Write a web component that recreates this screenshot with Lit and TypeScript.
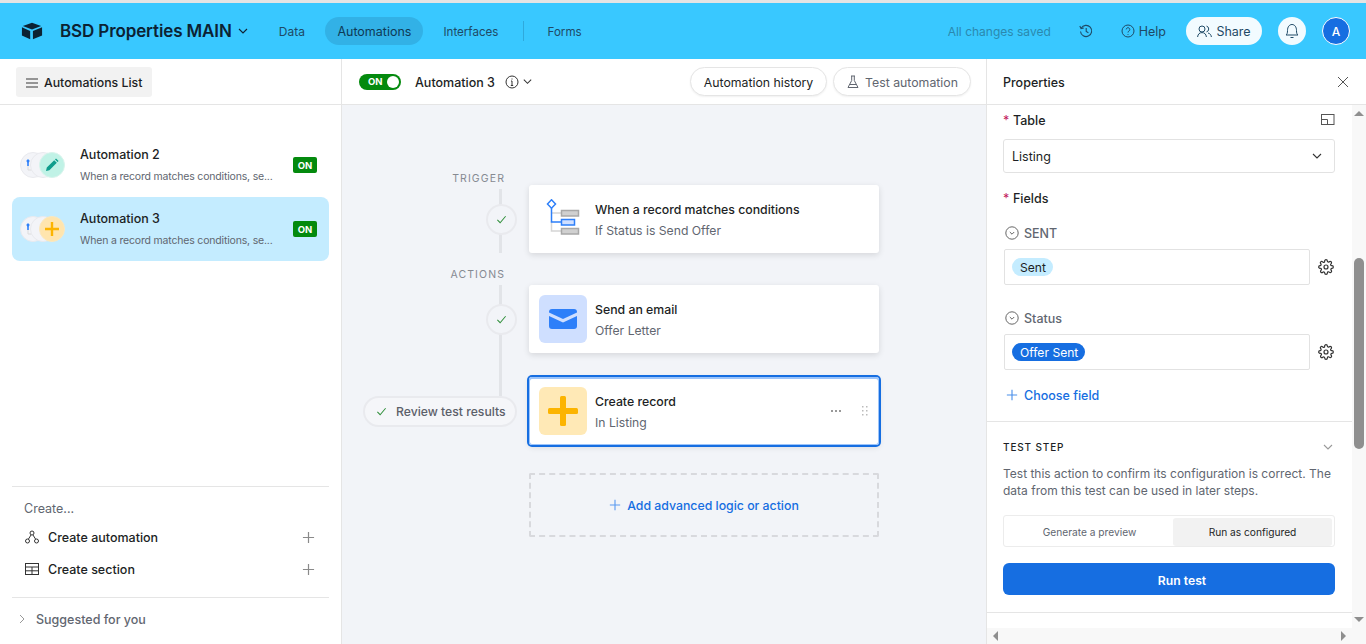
import { LitElement, html, css, svg } from "lit";
import { customElement } from "lit/decorators.js";

const chev = (s = 12, c = "currentColor") => html`<svg width=${s} height=${s} viewBox="0 0 12 12" fill="none" stroke=${c} stroke-width="1.1"><path d="M2 4l4 4 4-4"/></svg>`;
const plus = (s = 14, c = "#8a8a8a", w = 1.3) => html`<svg width=${s} height=${s} viewBox="0 0 14 14" fill="none" stroke=${c} stroke-width=${w}><path d="M7 1v12M1 7h12"/></svg>`;
const check = (s = 12) => html`<svg width=${s} height=${s} viewBox="0 0 12 12" fill="none" stroke="#2f8f3a" stroke-width="1.1"><path d="M1.5 6.5l3 3 6-7"/></svg>`;
const gear = html`<svg width="16" height="16" viewBox="0 0 24 24" fill="none" stroke="#333" stroke-width="1.8" stroke-linejoin="round"><circle cx="12" cy="12" r="3"/><path d="M19.4 15a1.65 1.65 0 0 0 .33 1.82l.06.06a2 2 0 1 1-2.83 2.83l-.06-.06a1.65 1.65 0 0 0-2.82 1.17V21a2 2 0 1 1-4 0v-.09a1.65 1.65 0 0 0-2.82-1.08l-.06.06a2 2 0 1 1-2.83-2.83l.06-.06A1.65 1.65 0 0 0 3.09 14H3a2 2 0 1 1 0-4h.09a1.65 1.65 0 0 0 1.08-2.82l-.06-.06a2 2 0 1 1 2.83-2.83l.06.06A1.65 1.65 0 0 0 10 3.09V3a2 2 0 1 1 4 0v.09a1.65 1.65 0 0 0 2.82 1.08l.06-.06a2 2 0 1 1 2.83 2.83l-.06.06A1.65 1.65 0 0 0 20.91 10H21a2 2 0 1 1 0 4h-.09a1.65 1.65 0 0 0-1.51 1z"/></svg>`;
const circleChev = html`<svg width="14" height="14" viewBox="0 0 14 14" fill="none" stroke="#666" stroke-width="1"><circle cx="7" cy="7" r="6.2"/><path d="M4.8 6l2.2 2.2L9.2 6"/></svg>`;
const triggerMini = svg`<path d="M3 0l1.800 2L3 4 1.200 2z" fill="#2d7ff9"/><path d="M3 3v4" stroke="#2d7ff9" stroke-width="1.600" fill="none"/><path d="M3 7v4h4" stroke="#dcdcdc" stroke-width="1" fill="none"/>`;

@customElement("app-root")
export class AppRoot extends LitElement {
  static styles = css`
    :host { display: block; width: 1366px; height: 644px; overflow: hidden; font-family: Inter, "Noto Sans", sans-serif; color: #1d1f25; font-size: 13px; background: #fff; }
    * { box-sizing: border-box; }
    svg { display: block; flex: none; }
    .strip { height: 3px; background: #e4e4e4; }
    header { height: 56px; background: #39c8ff; display: flex; align-items: center; padding: 0 16px 0 21px; }
    .logo { margin-right: 17px; }
    .base { font-size: 17px; font-weight: 600; color: #0c2233; letter-spacing: -0.12px; white-space: nowrap; }
    .base-chev { margin: 0 30px 0 5px; color: #123; }
    .nav { color: #1f4a66; padding: 0 12px; height: 28px; display: flex; align-items: center; border-radius: 14px; font-size: 12.5px; }
    .nav.data { font-size: 12px; padding: 0 13.5px 0 0; }
    .nav.on { background: #32b1e6; color: #0f3a55; margin: 0 8px 0 7px; }
    .nav.tight { font-size: 11.6px; padding-top: 1px; }
    .nav-div { width: 1px; height: 20px; background: #2fa9dc; margin: 0 12px; }
    .grow { flex: 1; }
    .saved { color: #2b88ae; font-size: 12px; margin-right: 28px; }
    .help { display: flex; align-items: center; gap: 4px; color: #1f4a66; font-size: 12.5px; margin: 0 20px 0 28px; }
    .share { width: 76px; height: 28px; background: #f2fbff; border-radius: 14px; display: flex; align-items: center; justify-content: center; gap: 4px; color: #1f4a66; font-size: 12.5px; }
    .bell { width: 28px; height: 28px; border-radius: 50%; background: #f2fbff; display: flex; align-items: center; justify-content: center; margin: 0 16px; }
    .avatar { width: 28px; height: 28px; border-radius: 50%; background: #166ee1; border: 1px solid #fff; color: #fff; display: flex; align-items: center; justify-content: center; font-size: 12px; font-weight: 500; }
    .main { display: grid; grid-template-columns: 342px 644px 380px; height: 585px; }
    aside { border-right: 1px solid #e5e5e5; display: flex; flex-direction: column; }
    .side-head { height: 46px; border-bottom: 1px solid #e5e5e5; padding: 8px 16px; }
    .list-btn { width: 136px; height: 30px; background: #f2f2f2; border-radius: 3px; display: flex; align-items: center; gap: 6px; padding: 1px 0 0 10px; font-weight: 500; font-size: 12.3px; white-space: nowrap; }
    .items { padding: 28px 12px 0; flex: 1; }
    .item { height: 64px; border-radius: 8px; display: flex; align-items: center; padding: 0 12px 0 8px; }
    .item.on { background: #c4ecff; }
    .stack { width: 60px; height: 26px; display: flex; }
    .dot { width: 26px; height: 26px; border-radius: 50%; background: #f3f4f8; border: 1px solid #e9eaee; margin-right: -16px; display: flex; align-items: center; justify-content: center; padding: 0 8px 0 0; flex: none; }
    .dot.mid { margin-right: -17px; }
    .dot.teal { background: #c0f2e6; border-color: #d8f4ec; padding: 0; }
    .dot.amber { background: #ffe5ae; border-color: #fbe8c0; padding: 0; }
    .item-text { flex: 1; min-width: 0; padding-top: 2px; }
    .t { font-weight: 500; font-size: 12.5px; line-height: 16px; margin-bottom: 6px; }
    .s { font-size: 10.5px; letter-spacing: -0.18px; line-height: 16px; color: #616670; white-space: nowrap; }
    .badge { width: 24px; height: 16px; background: #048a0e; color: #fff; border-radius: 2px; font-size: 9.5px; font-weight: 700; display: flex; align-items: center; justify-content: center; }
    .create { margin: 0 12px; border-top: 1px solid #e5e5e5; height: 111px; padding: 14px 12px 0; }
    .c-label { color: #616670; font-size: 12.5px; line-height: 16px; margin-bottom: 4px; }
    .c-row { height: 32px; display: flex; align-items: center; gap: 8px; font-weight: 500; font-size: 12.5px; padding-right: 2px; }
    .c-row span { flex: 1; }
    .suggest { margin: 0 12px; border-top: 1px solid #e5e5e5; height: 47px; display: flex; align-items: center; gap: 9px; padding: 0 0 4px 5px; color: #616670; font-size: 12.5px; font-weight: 500; }
    .center { display: flex; flex-direction: column; background: #f2f4f8; }
    .tool { height: 46px; background: #fff; border-bottom: 1px solid #e5e5e5; display: flex; align-items: center; padding: 0 15px 0 17px; }
    .toggle { width: 42px; height: 16px; background: #048a0e; border-radius: 8px; display: flex; align-items: center; justify-content: space-between; padding: 0 2px 0 9px; color: #fff; font-size: 9.5px; font-weight: 700; margin-right: 14px; }
    .knob { width: 12px; height: 12px; border-radius: 50%; background: #fff; }
    .a-name { font-weight: 500; font-size: 12.5px; margin-right: 10px; padding-top: 2px; }
    .pill-btn { height: 29px; border-radius: 15px; background: #fff; border: 1px solid #e5e5e5; display: flex; align-items: center; justify-content: center; gap: 5px; font-size: 12.3px; padding-top: 1px; box-shadow: 0 1px 2px rgba(0,0,0,.06); }
    .canvas { flex: 1; padding-top: 65px; }
    .lab { width: 163px; text-align: right; font-size: 10.5px; letter-spacing: 1.1px; color: #868a92; line-height: 17px; height: 15px; }
    .lab.a { margin-top: 13px; height: 19px; }
    .step { display: grid; grid-template-columns: 187px 350px; height: 68px; }
    .rail { position: relative; display: flex; align-items: center; justify-content: flex-end; padding-right: 12px; }
    .line { position: absolute; width: 3px; right: 27px; background: #e2e4e8; }
    .node { position: relative; width: 31px; height: 31px; border-radius: 50%; background: #f2f4f8; border: 2px solid #e9eaee; display: flex; align-items: center; justify-content: center; }
    .review { position: relative; height: 31px; border-radius: 16px; background: #f5f6f9; border: 2px solid #e9eaee; width: 154px; display: flex; align-items: center; gap: 9px; padding: 1px 0 0 11px; color: #5c6069; font-size: 12.2px; font-weight: 500; white-space: nowrap; }
    .card { background: #fff; border-radius: 3px; box-shadow: 0 2px 6px rgba(0,0,0,.12); display: flex; align-items: center; padding: 0 10px; gap: 8px; }
    .card.sel { box-shadow: inset 0 0 0 1px #9cc4fa, inset 0 1px 0 1px #9cc4fa, 0 0 0 2px #166ee1, 0 2px 6px rgba(0,0,0,.12); }
    .ic { width: 48px; height: 48px; border-radius: 6px; display: flex; align-items: center; justify-content: center; flex: none; }
    .ic.blue { background: #cfdfff; }
    .ic.amber { background: #ffe9b6; }
    .ctext { flex: 1; padding-top: 2px; }
    .ct { font-weight: 500; font-size: 12.3px; line-height: 16px; margin-bottom: 5px; white-space: nowrap; }
    .cs { font-size: 12.2px; line-height: 16px; color: #616670; }
    .dashed { margin: 28px 0 0 187px; width: 350px; height: 64px; border: 2px dashed #d8d9dd; border-radius: 2px; display: flex; align-items: center; justify-content: center; gap: 6px; color: #166ee1; font-weight: 500; font-size: 12.3px; }
    .props { display: flex; flex-direction: column; border-left: 1px solid #e5e5e5; }
    .props-head { height: 46px; border-bottom: 1px solid #e5e5e5; display: flex; align-items: center; justify-content: space-between; padding: 0 17px 0 16px; font-weight: 500; font-size: 12.5px; }
    .props-head span { padding-top: 2px; }
    .props-body { flex: 1; display: flex; min-height: 0; }
    .content { width: 365px; display: flex; flex-direction: column; }
    .form { height: 317px; padding: 7px 16px 0 16px; border-bottom: 1px solid #e5e5e5; }
    .lbl { display: flex; align-items: center; font-weight: 500; font-size: 12.5px; height: 16px; }
    .star { color: #c2185b; width: 10px; font-weight: 400; }
    .select { width: 332px; height: 34px; margin-top: 11px; border: 1px solid #e2e2e2; border-radius: 3px; display: flex; align-items: center; justify-content: space-between; padding: 0 11px 0 8px; font-size: 12.5px; }
    .field-l { display: flex; align-items: center; gap: 5px; color: #616670; font-size: 12.5px; font-weight: 500; height: 16px; margin-left: 2px; }
    .field-r { display: flex; align-items: center; gap: 8px; margin-left: 1px; margin-top: 8px; }
    .input { width: 306px; height: 36px; border: 1px solid #e2e2e2; border-radius: 2px; display: flex; align-items: center; padding: 0 7px; }
    .tag { height: 18px; line-height: 20px; border-radius: 9px; padding: 0 7px 0 8px; font-size: 12.1px; }
    .tag.l { background: #c4ecff; color: #1d1f25; }
    .tag.d { background: #166ee1; color: #fff; }
    .choose { display: flex; align-items: center; gap: 6px; color: #166ee1; font-weight: 500; font-size: 12.5px; margin: 17px 0 0 3px; height: 16px; }
    .test { height: 191px; border-bottom: 1px solid #e5e5e5; padding: 17px 16px 0; }
    .test-h { display: flex; align-items: center; justify-content: space-between; font-size: 10px; font-weight: 500; letter-spacing: .85px; height: 16px; padding-right: 2px; color: #1d1f25; }
    .desc { width: 332px; margin-top: 10px; font-size: 12px; line-height: 17px; color: #616670; }
    .seg { width: 332px; height: 32px; margin-top: 16px; border: 1px solid #ececec; border-radius: 3px; padding: 2px; display: grid; grid-template-columns: 1fr 159px; font-size: 10.2px; color: #616670; text-align: center; line-height: 28px; }
    .seg .act { background: #f2f2f2; border-radius: 3px; color: #1d1f25; }
    .run { width: 332px; height: 32px; margin-top: 16px; background: #166ee1; border-radius: 6px; color: #fff; font-weight: 600; font-size: 12.2px; display: flex; align-items: center; justify-content: center; padding: 2px 0 0 26px; }
    .vbar { width: 14px; background: #f8f8f8; position: relative; }
    .thumb { position: absolute; left: 2px; width: 10px; top: 153px; height: 191px; background: #8f8f8f; border-radius: 5px; }
    .arrow { position: absolute; left: 2px; width: 0; height: 0; border-left: 5px solid transparent; border-right: 5px solid transparent; }
    .arrow.u { top: 6px; border-bottom: 5px solid #8f8f8f; }
    .arrow.d { bottom: 6px; border-top: 5px solid #8f8f8f; }
    .hbar { height: 16px; background: #f8f8f8; display: flex; align-items: center; justify-content: space-between; padding: 0 20px 0 6px; }
    .al { border-top: 5px solid transparent; border-bottom: 5px solid transparent; border-right: 5px solid #8f8f8f; }
    .ar { border-top: 5px solid transparent; border-bottom: 5px solid transparent; border-left: 5px solid #8f8f8f; }
  `;

  private minis() {
    return html`<div class="dot"><svg width="8" height="12" viewBox="0 0 8 12">${triggerMini}</svg></div><div class="dot mid"></div>`;
  }

  render() {
    return html`
      <div class="strip"></div>
      <header>
        <svg class="logo" width="22" height="18" viewBox="0 0 24 18" fill="#0c2233"><path d="M12 0L2 3.6l10 3.8 10-3.8z"/><path d="M13 9v9l10-4V5z"/><path d="M1 5v9l9 4V9z"/></svg>
        <div class="base">BSD Properties MAIN</div>
        <div class="base-chev">${chev(12)}</div>
        <div class="nav data">Data</div>
        <div class="nav on">Automations</div>
        <div class="nav tight">Interfaces</div>
        <div class="nav-div"></div>
        <div class="nav tight">Forms</div>
        <div class="grow"></div>
        <div class="saved">All changes saved</div>
        <svg width="14" height="14" viewBox="0 0 14 14" fill="none" stroke="#1f4a66" stroke-width="1.1"><path d="M2.2 4.2A5.6 5.6 0 1 1 1.5 7.5"/><path d="M.8 2l1.3 2.6L4.8 4"/><path d="M7.2 4v3.4l2.2 1.3"/></svg>
        <div class="help"><svg width="14" height="14" viewBox="0 0 14 14" fill="none" stroke="#1f4a66" stroke-width="1"><circle cx="7" cy="7" r="6"/><path d="M5.2 5.4a1.8 1.8 0 1 1 2.8 1.6c-.7.4-1 .8-1 1.5"/><path d="M7 10v.8"/></svg>Help</div>
        <div class="share"><svg width="15" height="13" viewBox="0 0 15 13" fill="none" stroke="#1f4a66" stroke-width="1"><circle cx="5" cy="4" r="3"/><path d="M.6 12c.3-3 2-4.4 4.4-4.4S9.100 9 9.400 12"/><path d="M9.500 1.100a3 3 0 0 1 0 5.800M11 8c2 .4 3.100 1.800 3.400 4"/></svg>Share</div>
        <div class="bell"><svg width="14" height="16" viewBox="0 0 14 16" fill="none" stroke="#1f4a66" stroke-width="1"><path d="M1 12c1.200-1 1.500-2 1.500-4.500C2.500 4 4.300 1.500 7 1.500s4.500 2.500 4.500 6c0 2.500.3 3.500 1.500 4.500z"/><path d="M5.500 14.500h3"/></svg></div>
        <div class="avatar">A</div>
      </header>
      <div class="main">
        <aside>
          <div class="side-head"><div class="list-btn"><svg width="12" height="10" viewBox="0 0 12 10" fill="none" stroke="#777" stroke-width="1.400"><path d="M0 1h12M0 5h12M0 9h12"/></svg>Automations List</div></div>
          <div class="items">
            <div class="item">
              <div class="stack">${this.minis()}<div class="dot teal"><svg width="16" height="16" viewBox="0 0 16 16" fill="#0f9d8c"><path d="M2 14l.8-3.400 7.400-7.400 2.600 2.600-7.400 7.400zM11 2.400l1-1 2.600 2.600-1 1z"/></svg></div></div>
              <div class="item-text"><div class="t">Automation 2</div><div class="s">When a record matches conditions, se...</div></div>
              <div class="badge">ON</div>
            </div>
            <div class="item on">
              <div class="stack">${this.minis()}<div class="dot amber"><svg width="16" height="16" viewBox="0 0 16 16" fill="none" stroke="#fcb400" stroke-width="2.400"><path d="M8 1v14M1 8h14"/></svg></div></div>
              <div class="item-text"><div class="t">Automation 3</div><div class="s">When a record matches conditions, se...</div></div>
              <div class="badge">ON</div>
            </div>
          </div>
          <div class="create">
            <div class="c-label">Create...</div>
            <div class="c-row"><svg width="16" height="14" viewBox="0 0 16 14" fill="none" stroke="#333" stroke-width="1"><circle cx="8" cy="3" r="2"/><circle cx="3.500" cy="11" r="2"/><circle cx="12.500" cy="11" r="2"/><path d="M7 5l-2.500 4M9 5l2.500 4"/></svg><span>Create automation</span>${plus(13)}</div>
            <div class="c-row"><svg width="16" height="14" viewBox="0 0 16 14" fill="none" stroke="#333" stroke-width="1"><rect x="1.500" y="1.500" width="13" height="11"/><path d="M1.500 5h13M1.500 8.800h13M8 5v7.500"/></svg><span>Create section</span>${plus(13)}</div>
          </div>
          <div class="suggest"><svg width="10" height="12" viewBox="0 0 10 12" fill="none" stroke="#999" stroke-width="1"><path d="M3 2l4 4-4 4"/></svg>Suggested for you</div>
        </aside>
        <section class="center">
          <div class="tool">
            <div class="toggle">ON<div class="knob"></div></div>
            <div class="a-name">Automation 3</div>
            <svg width="14" height="14" viewBox="0 0 14 14" fill="none" stroke="#333" stroke-width="1"><circle cx="7" cy="7" r="6"/><path d="M7 6v4.500M5.800 10.500h2.400M6 6h1M7 3.500v1"/></svg>
            <div style="margin-left:3px">${chev(11, "#333")}</div>
            <div class="grow"></div>
            <div class="pill-btn" style="width:137px;margin-right:6px">Automation history</div>
            <div class="pill-btn" style="width:138px;color:#616670"><svg width="14" height="14" viewBox="0 0 14 14" fill="none" stroke="#616670" stroke-width="1"><path d="M5 1h4M5.700 1v4.500L2 12.500h10L8.300 5.500V1"/><path d="M3.800 9.500h6.400"/></svg>Test automation</div>
          </div>
          <div class="canvas">
            <div class="lab">TRIGGER</div>
            <div class="step">
              <div class="rail"><div class="line" style="top:4px;bottom:0"></div><div class="node">${check(11)}</div></div>
              <div class="card" style="gap:15px;padding-left:16px">
                <svg width="35" height="40" viewBox="0 0 35 40" fill="none"><path d="M6.500 14H16M6.500 22v10H16" stroke="#d5d5d5" stroke-width="1.500"/><path d="M6.500 9v14H16" stroke="#2d7ff9" stroke-width="1.500"/><path d="M6.500 .8l4 4.200-4 4.200-4-4.200z" stroke="#2d7ff9" stroke-width="1.500" fill="#fff"/><rect x="16.500" y="11.500" width="17" height="5.500" fill="#d0d0d0" stroke="#a8a8a8" stroke-width="1.500"/><rect x="16.500" y="20.500" width="13" height="5.500" fill="#cfdfff" stroke="#2d7ff9" stroke-width="1.500"/><rect x="16.500" y="29.500" width="17" height="5.500" fill="#d0d0d0" stroke="#a8a8a8" stroke-width="1.500"/></svg>
                <div class="ctext"><div class="ct">When a record matches conditions</div><div class="cs">If Status is Send Offer</div></div>
              </div>
            </div>
            <div class="lab a">ACTIONS</div>
            <div class="step">
              <div class="rail"><div class="line" style="top:0;bottom:-43px"></div><div class="node">${check(11)}</div></div>
              <div class="card">
                <div class="ic blue"><svg width="28" height="20" viewBox="0 0 28 20"><path d="M3 0h22a3 3 0 0 1 3 3v.6L14 10 0 3.600V3a3 3 0 0 1 3-3z" fill="#2d7ff9"/><path d="M0 7l14 6.400L28 7v10a3 3 0 0 1-3 3H3a3 3 0 0 1-3-3z" fill="#2d7ff9"/></svg></div>
                <div class="ctext"><div class="ct">Send an email</div><div class="cs">Offer Letter</div></div>
              </div>
            </div>
            <div class="step" style="margin-top:24px">
              <div class="rail"><div class="review">${check(11)}Review test results</div></div>
              <div class="card sel">
                <div class="ic amber"><svg width="30" height="30" viewBox="0 0 30 30" fill="#fcb400"><rect x="12" y="0" width="6" height="30" rx="1.500"/><rect x="0" y="12" width="30" height="6" rx="1.500"/></svg></div>
                <div class="ctext"><div class="ct">Create record</div><div class="cs">In Listing</div></div>
                <svg width="12" height="4" viewBox="0 0 12 4" fill="#777" style="margin-right:2px"><circle cx="2" cy="2" r="1"/><circle cx="6" cy="2" r="1"/><circle cx="10" cy="2" r="1"/></svg>
                <svg style="margin:0 0 0 9px" width="8" height="12" viewBox="0 0 8 12" fill="#bbb"><rect x="1" y="1" width="1.500" height="1.500"/><rect x="5" y="1" width="1.500" height="1.500"/><rect x="1" y="5" width="1.500" height="1.500"/><rect x="5" y="5" width="1.500" height="1.500"/><rect x="1" y="9" width="1.500" height="1.500"/><rect x="5" y="9" width="1.500" height="1.500"/></svg>
              </div>
            </div>
            <div class="dashed">${plus(12, "#5a9af0", 1.3)}Add advanced logic or action</div>
          </div>
        </section>
        <section class="props">
          <div class="props-head"><span>Properties</span><svg width="12" height="12" viewBox="0 0 12 12" fill="none" stroke="#555" stroke-width="1"><path d="M1 1l10 10M11 1L1 11"/></svg></div>
          <div class="props-body">
            <div class="content">
              <div class="form">
                <div class="lbl"><span class="star">*</span>Table<div class="grow"></div><svg width="14" height="12" viewBox="0 0 14 12" fill="none" stroke="#555" stroke-width="1" style="margin-right:1px"><rect x=".5" y=".5" width="12.500" height="10"/><path d="M.5 5.500h6v5"/></svg></div>
                <div class="select">Listing${chev(12, "#333")}</div>
                <div class="lbl" style="margin-top:17px"><span class="star">*</span>Fields</div>
                <div class="field-l" style="margin-top:19px">${circleChev}SENT</div>
                <div class="field-r"><div class="input"><div class="tag l">Sent</div></div>${gear}</div>
                <div class="field-l" style="margin-top:25px">${circleChev}Status</div>
                <div class="field-r"><div class="input"><div class="tag d">Offer Sent</div></div>${gear}</div>
                <div class="choose">${plus(12, "#4a8fea", 1.3)}Choose field</div>
              </div>
              <div class="test">
                <div class="test-h">TEST STEP${chev(12, "#999")}</div>
                <div class="desc">Test this action to confirm its configuration is correct. The data from this test can be used in later steps.</div>
                <div class="seg"><div>Generate a preview</div><div class="act">Run as configured</div></div>
                <div class="run">Run test</div>
              </div>
              <div class="grow"></div>
            </div>
            <div class="vbar"><div class="arrow u"></div><div class="thumb"></div><div class="arrow d"></div></div>
          </div>
          <div class="hbar"><div class="al"></div><div class="ar"></div></div>
        </section>
      </div>
    `;
  }
}
